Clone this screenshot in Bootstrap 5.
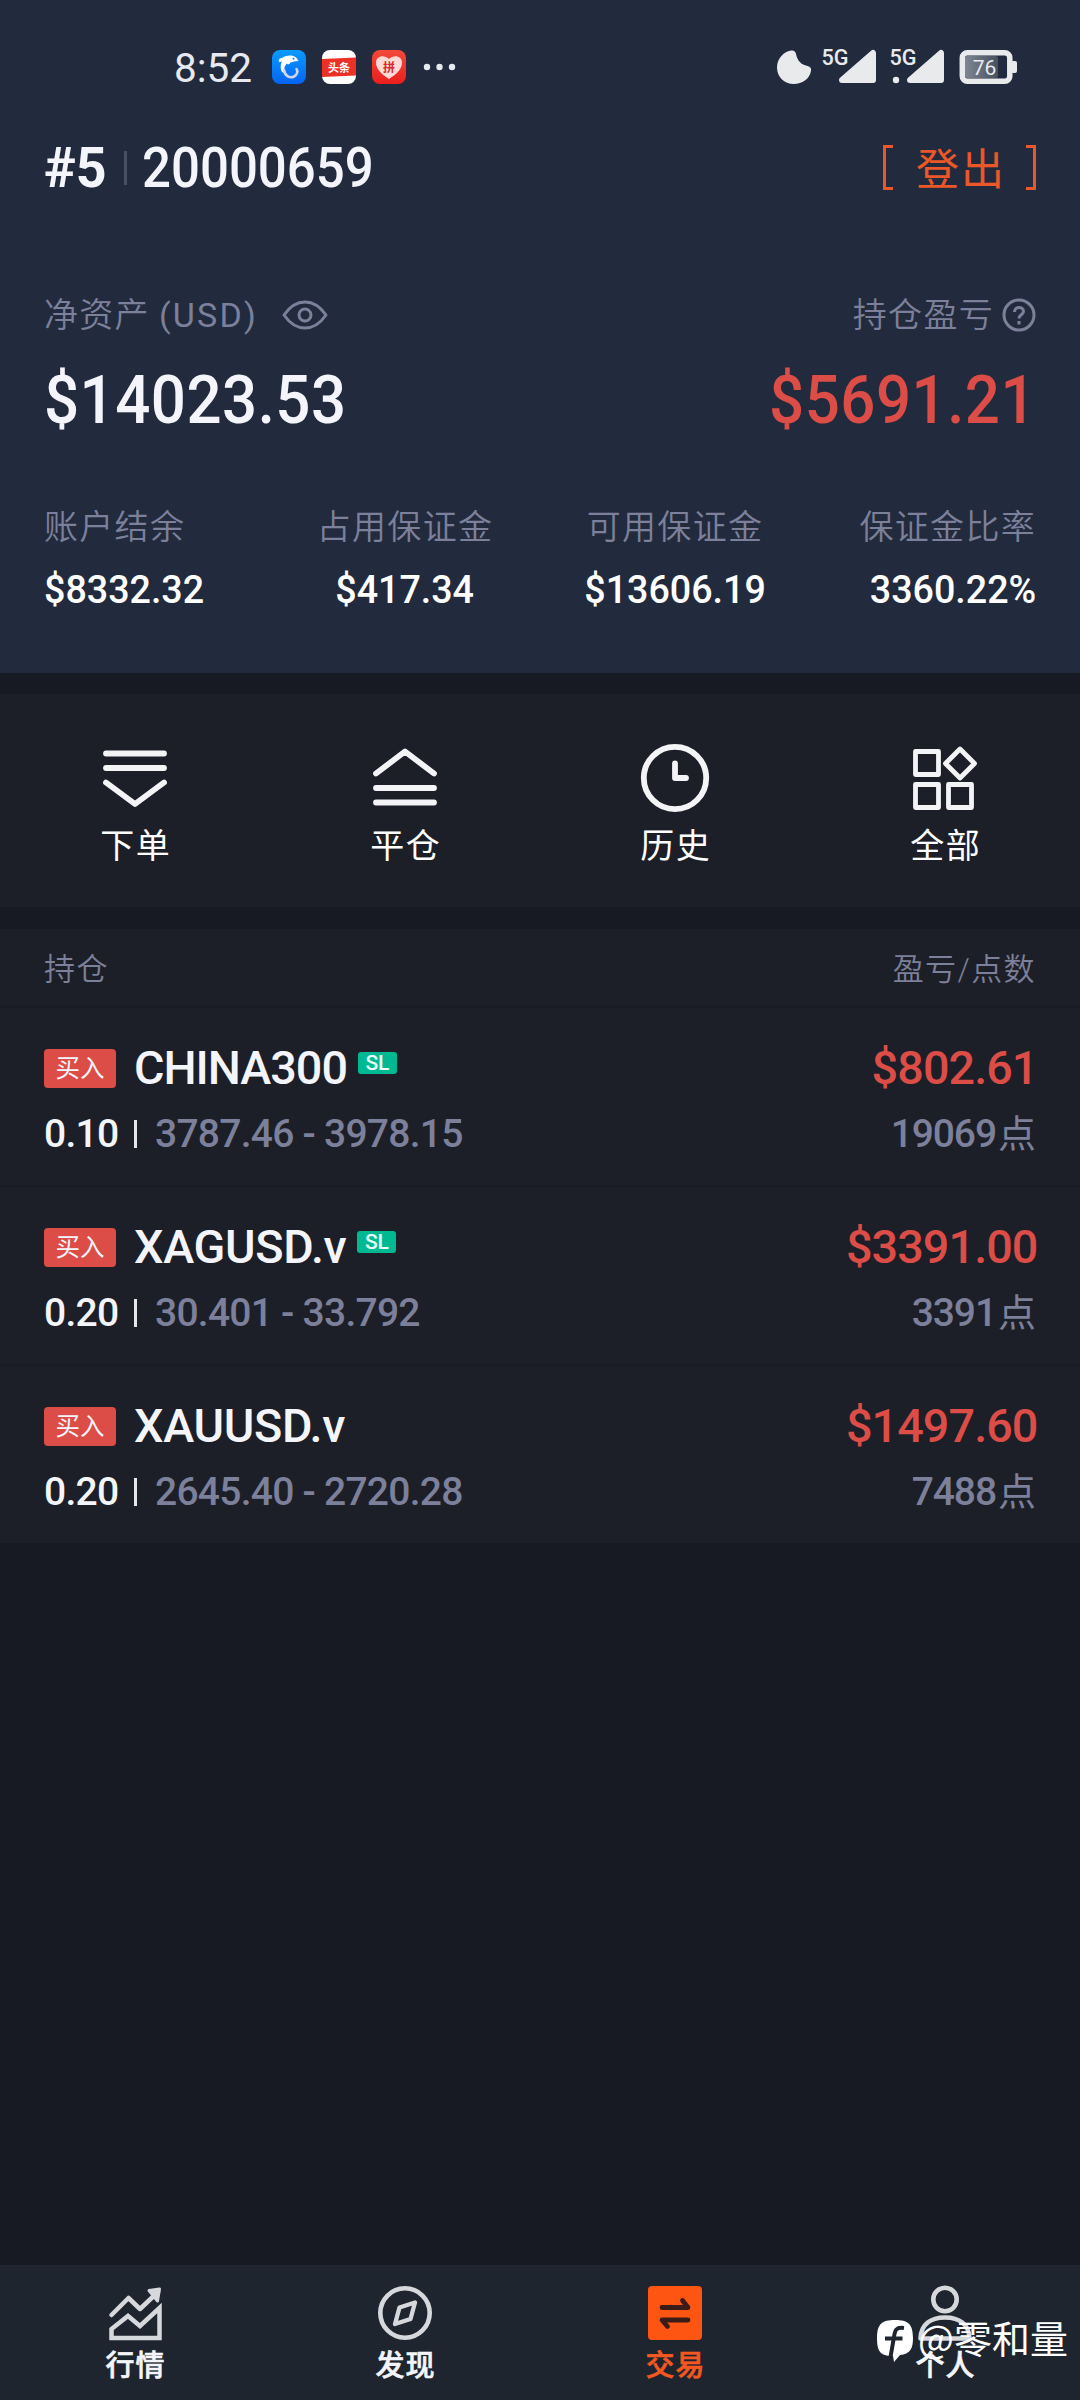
<!DOCTYPE html>
<html lang="zh-CN">
<head>
<meta charset="utf-8">
<meta name="viewport" content="width=device-width, initial-scale=1">
<title>交易</title>
<link href="https://cdn.jsdelivr.net/npm/bootstrap@5.3.0/dist/css/bootstrap.min.css" rel="stylesheet">
<style>
  body { background:#171a22; color:#f4f5fa; font-family:Roboto,"Noto Sans CJK SC",sans-serif; font-size:34px; line-height:1; }
  .screen { width:1080px; height:2400px; overflow:hidden; }
  .px { padding-left:44px; padding-right:44px; }
  .account { background:#222b3d; height:673px; }
  .statusbar { height:134px; padding:0 63px 0 174px; color:#e6e9f0; }
  .clock { font-size:40.5px; width:80px; letter-spacing:0; margin-right:18px; padding-top:2px; }
  .app-ico { width:34px; height:34px; margin-right:16px; }
  .sys { overflow:visible; }
  .acct-row { height:68px; }
  .num { font-weight:500; display:inline-block; white-space:nowrap; transform:scaleX(.93); transform-origin:left center; }
  .num-end { transform-origin:right center; }
  .num-mid { transform-origin:center; }
  .acct-id { font-size:56px; transform:scaleX(.91); }
  .acct-tag { width:80px; font-weight:700; transform:scaleX(.96); }
  .acct-sep { width:3px; height:34px; background:#4a5064; margin-right:15px; }
  .logout { color:#ea5728; font-family:"Noto Sans CJK SC",sans-serif; font-weight:400; font-size:43px; letter-spacing:2px; height:56px; line-height:50px; margin-top:-4px; }
  .brk { width:10px; height:45px; border:3px solid #ea5728; margin-top:2px; }
  .brk-l { border-right:0; margin-right:23px; } .brk-r { border-left:0; margin-left:20px; }
  .dim { color:#7c809a; }
  .cap { font-weight:350; letter-spacing:1.3px; height:40px; line-height:40px; white-space:nowrap; }
  .latin { letter-spacing:2.2px; margin-left:9px; font-weight:400; }
  .worth-cap { height:48px; margin-top:89px; line-height:48px; }
  .worth { height:80px; margin-top:21px; font-size:66.5px; letter-spacing:.5px; }
  .red { color:#db4d46; }
  .stats { margin-top:67px; }
  .stat-val { height:40px; line-height:40px; font-size:39.4px; margin-top:23px; color:#fff; }
  .stat-val .num { transform:scaleX(.955); }
  .panel { background:#1c1f27; }
  .actions { margin-top:21px; height:213px; padding-top:48px; }
  .actions svg { width:72px; height:72px; display:block; }
  .act-cap { margin-top:12px; height:40px; line-height:40px; letter-spacing:1.5px; margin-right:-1.5px; color:#fff; }
  .list-head { margin-top:22px; height:77px; font-size:31px; font-weight:350; letter-spacing:1.4px; padding-top:3px; }
  .pos { height:179px; padding-top:35px; border-top:2px solid #191c24; }
  .pos-main { height:50px; font-size:46.7px; font-weight:500; }
  .pos-sub { height:44px; margin-top:19px; font-size:39px; font-weight:500; letter-spacing:-.75px; }
  .side { width:72px; height:39px; border-radius:4px; background:#db4d46; font-size:24.5px; font-weight:400; margin:2px 18px 0 0; padding-top:1px; }
  .sym { letter-spacing:-.3px; }
  .sym-tight { letter-spacing:-1px; }
  .amt { letter-spacing:-.9px; margin-right:-1.5px; }
  .sl { width:39px; height:22px; border-radius:3px; background:#00b993; font-size:21px; font-weight:500; margin:-9px 0 0 11px; color:#e8fff8; }
  .bar { width:3px; height:28px; background:#e4e6ec; margin:0 18px; }
  .lots { width:72px; }
  .pts { letter-spacing:-1.1px; }
  .dian { font-size:38px; font-weight:400; margin-left:2px; letter-spacing:0; }
  .tabs { height:135px; background:#1f252f; border-top:1px solid #232933; padding-top:18px; position:relative; }
  .tabs svg.tab { width:58px; height:58px; display:block; }
  .tab-cap { font-size:29px; font-weight:500; -webkit-text-stroke:.6px currentColor; letter-spacing:1px; margin-right:-1px; height:34px; line-height:34px; margin-top:7px; }
  .on { color:#f4571f; }
  .wm { position:absolute; left:876px; top:50px; height:50px; font-family:"Noto Sans CJK SC",sans-serif; font-size:38px; line-height:50px; white-space:nowrap; color:#fff; }
  .wm span { padding-bottom:8px; }
</style>
<script src="https://cdn.jsdelivr.net/npm/bootstrap@5.3.0/dist/js/bootstrap.bundle.min.js"></script>
</head>
<body>
<div class="screen d-flex flex-column">

  <section class="account">
    <div class="statusbar d-flex align-items-center justify-content-between">
      <div class="d-flex align-items-center">
        <span class="clock">8:52</span>
        <svg class="app-ico" viewBox="0 0 34 34">
          <defs><linearGradient id="blu" x1="0" y1="0" x2="0" y2="1"><stop offset="0" stop-color="#0a9bff"/><stop offset="1" stop-color="#0563f2"/></linearGradient></defs>
          <rect width="34" height="34" rx="8" fill="url(#blu)"/>
          <path d="M7 12C6 9 8 8 10 8C14 5.500 18 5 21 6C24 6.500 25 8.500 26.500 11C23 11 21 12 18.500 12.500C17.500 14.500 15.500 15 15 13.500C12 16 11.500 20 14 24L10 22C8 18 8.500 14 10 11.500Z" fill="#fff"/>
          <path d="M12 20C13 26.500 18 28.500 22 26.500C25.500 24.500 26 21 24.500 19" fill="none" stroke="#cfd6ea" stroke-width="2.600" stroke-linecap="round"/>
          <circle cx="21.500" cy="8.800" r="1" fill="#0a83fa"/>
        </svg>
        <svg class="app-ico" viewBox="0 0 34 34">
          <rect width="34" height="34" rx="8" fill="#fff"/><path d="M0 9L34 7.500V25.500L0 27Z" fill="#ed3026"/>
          <text x="17" y="21.500" font-size="11" font-weight="700" text-anchor="middle" fill="#fff">头条</text>
        </svg>
        <svg class="app-ico" viewBox="0 0 34 34">
          <defs><linearGradient id="rd" x1="0" y1="0" x2="0" y2="1"><stop offset="0" stop-color="#f2493a"/><stop offset="1" stop-color="#ea1f1d"/></linearGradient></defs>
          <rect width="34" height="34" rx="8" fill="url(#rd)"/>
          <path d="M17 29C9 24 4 19 4 12.500C4 6 12 4 17 9C22 4 30 6 30 12.500C30 19 25 24 17 29Z" fill="#ffd9d6"/>
          <text x="17" y="22" font-size="12" font-weight="700" text-anchor="middle" fill="#d52a25">拼</text>
        </svg>
        <svg width="34" height="8" viewBox="0 0 34 8" fill="#e6e9f0"><circle cx="5" cy="4" r="3.200"/><circle cx="17.500" cy="4" r="3.200"/><circle cx="30" cy="4" r="3.200"/></svg>
      </div>
      <svg class="sys" width="241" height="36" viewBox="776 49 241 36" fill="#e8eaec">
        <path d="M791 50.500C794 50 795.500 51.500 796 54C797.500 61 801 64.500 807.500 66C810.500 66.500 811.500 68.500 811 71C809.500 79 802 84 794 84C784 84 777 76.500 777 67.500C777 59 783 52 791 50.500Z"/>
        <text x="821.500" y="65" font-size="21.500" font-weight="500" textLength="27" lengthAdjust="spacingAndGlyphs">5G</text>
        <path d="M842 80L873 53V80Z" stroke="#e8eaec" stroke-width="6" stroke-linejoin="round"/>
        <text x="889.500" y="65" font-size="21.500" font-weight="500" textLength="27" lengthAdjust="spacingAndGlyphs">5G</text>
        <circle cx="896" cy="80" r="3.200"/>
        <path d="M910 80L941 53V80Z" stroke="#e8eaec" stroke-width="6" stroke-linejoin="round"/>
        <defs><linearGradient id="bat"><stop offset="0" stop-color="#7f8692"/><stop offset="1" stop-color="#46505f"/></linearGradient></defs>
        <rect x="962.300" y="52.800" width="47.500" height="28.500" rx="5" fill="#222b3d" stroke="#e8eaec" stroke-width="5.500"/>
        <rect x="965" y="56" width="33" height="22" rx="2" fill="url(#bat)"/>
        <rect x="1011" y="61" width="6" height="12" rx="2"/>
        <text x="984.500" y="74.500" font-size="21" text-anchor="middle">76</text>
      </svg>
    </div>

    <div class="acct-row px d-flex align-items-center justify-content-between">
      <div class="d-flex align-items-center">
        <span class="num acct-id acct-tag">#5</span><i class="acct-sep"></i><span class="num acct-id">20000659</span>
      </div>
      <div class="logout d-flex align-items-center"><i class="brk brk-l"></i>登出<i class="brk brk-r"></i></div>
    </div>

    <div class="px d-flex justify-content-between align-items-center cap worth-cap dim">
      <div class="d-flex align-items-center">净资产<span class="latin">(USD)</span>
        <svg width="46" height="32" viewBox="0 0 46 32" class="ms-4" fill="none" stroke="#7c809a" stroke-width="3"><path d="M2 16Q11 3 23 3T44 16Q35 29 23 29T2 16Z" stroke-linejoin="round"/><circle cx="23" cy="16" r="6"/></svg>
      </div>
      <div class="d-flex align-items-center">持仓盈亏
        <svg width="34" height="34" viewBox="0 0 34 34" class="ms-2" fill="none" stroke="#7c809a" stroke-width="3"><circle cx="17" cy="17" r="15"/><path d="M12.500 14C12.500 8 21.500 8 21.500 13.500C21.500 16.500 17 16.500 17 20.500"/><path d="M17 23V26.500"/></svg>
      </div>
    </div>
    <div class="px d-flex justify-content-between align-items-center worth">
      <span class="num">$14023.53</span><span class="num num-end red">$5691.21</span>
    </div>

    <div class="row g-0 stats">
      <div class="col-3"><div class="cap dim px">账户结余</div><div class="stat-val px"><span class="num">$8332.32</span></div></div>
      <div class="col-3 text-center"><div class="cap dim">占用保证金</div><div class="stat-val"><span class="num num-mid">$417.34</span></div></div>
      <div class="col-3 text-center"><div class="cap dim">可用保证金</div><div class="stat-val"><span class="num num-mid">$13606.19</span></div></div>
      <div class="col-3 text-end"><div class="cap dim px">保证金比率</div><div class="stat-val px"><span class="num num-end">3360.22%</span></div></div>
    </div>
  </section>

  <section class="panel actions row g-0">
    <div class="col-3 d-flex flex-column align-items-center">
      <svg viewBox="0 0 72 72" fill="none" stroke="#f4f4f6" stroke-width="5.800" stroke-linecap="round" stroke-linejoin="round"><path d="M7 11.500H65M7 26H65M7 40.500L36 62L65 40.500"/></svg>
      <div class="act-cap">下单</div></div>
    <div class="col-3 d-flex flex-column align-items-center">
      <svg viewBox="0 0 72 72" fill="none" stroke="#f4f4f6" stroke-width="5.800" stroke-linecap="round" stroke-linejoin="round"><path d="M7 31.500L36 9.500L65 31.500M7 46H65M7 60.500H65"/></svg>
      <div class="act-cap">平仓</div></div>
    <div class="col-3 d-flex flex-column align-items-center">
      <svg viewBox="0 0 72 72" fill="none" stroke="#f4f4f6" stroke-width="5.800" stroke-linecap="round" stroke-linejoin="round"><circle cx="36" cy="36" r="31.200"/><path d="M36 21.500V36H47"/></svg>
      <div class="act-cap">历史</div></div>
    <div class="col-3 d-flex flex-column align-items-center">
      <svg viewBox="0 0 72 72" fill="none" stroke="#f4f4f6" stroke-width="4.800" stroke-linejoin="round"><rect x="6.500" y="9.500" width="23" height="23"/><rect x="6.500" y="42.500" width="23" height="23"/><rect x="39.500" y="42.500" width="23" height="23"/><path d="M51 7L65.500 21.500L51 36L36.500 21.500Z"/></svg>
      <div class="act-cap">全部</div></div>
  </section>

  <section>
    <div class="panel list-head px dim d-flex justify-content-between align-items-center"><span>持仓</span><span>盈亏/点数</span></div>

    <div class="panel pos px">
      <div class="pos-main d-flex justify-content-between align-items-center">
        <div class="d-flex align-items-center"><span class="side d-flex align-items-center justify-content-center">买入</span><span class="sym sym-tight">CHINA300</span><span class="sl d-flex align-items-center justify-content-center">SL</span></div>
        <span class="amt red">$802.61</span>
      </div>
      <div class="pos-sub d-flex justify-content-between align-items-center">
        <div class="d-flex align-items-center"><span class="lots">0.10</span><i class="bar"></i><span class="dim">3787.46 - 3978.15</span></div>
        <div class="d-flex align-items-center dim"><span class="pts">19069</span><span class="dian">点</span></div>
      </div>
    </div>

    <div class="panel pos px">
      <div class="pos-main d-flex justify-content-between align-items-center">
        <div class="d-flex align-items-center"><span class="side d-flex align-items-center justify-content-center">买入</span><span class="sym">XAGUSD.v</span><span class="sl d-flex align-items-center justify-content-center">SL</span></div>
        <span class="amt red">$3391.00</span>
      </div>
      <div class="pos-sub d-flex justify-content-between align-items-center">
        <div class="d-flex align-items-center"><span class="lots">0.20</span><i class="bar"></i><span class="dim">30.401 - 33.792</span></div>
        <div class="d-flex align-items-center dim"><span class="pts">3391</span><span class="dian">点</span></div>
      </div>
    </div>

    <div class="panel pos px">
      <div class="pos-main d-flex justify-content-between align-items-center">
        <div class="d-flex align-items-center"><span class="side d-flex align-items-center justify-content-center">买入</span><span class="sym">XAUUSD.v</span></div>
        <span class="amt red">$1497.60</span>
      </div>
      <div class="pos-sub d-flex justify-content-between align-items-center">
        <div class="d-flex align-items-center"><span class="lots">0.20</span><i class="bar"></i><span class="dim">2645.40 - 2720.28</span></div>
        <div class="d-flex align-items-center dim"><span class="pts">7488</span><span class="dian">点</span></div>
      </div>
    </div>
  </section>

  <nav class="tabs row g-0 mt-auto">
    <div class="col-3 d-flex flex-column align-items-center">
      <svg class="tab" viewBox="0 0 58 58" fill="none" stroke="#d6d8dc" stroke-width="4.500" stroke-linecap="round" stroke-linejoin="round"><path d="M5.500 31L22.500 14L34 25L52 8"/><path d="M43 6.500L53.500 5L51.500 17Z" fill="#d6d8dc" stroke-width="3"/><path d="M5.500 54V45L22 32L34 42L53.500 24V54Z" stroke-linejoin="miter"/></svg>
      <div class="tab-cap">行情</div></div>
    <div class="col-3 d-flex flex-column align-items-center">
      <svg class="tab" viewBox="0 0 58 58" fill="none" stroke="#d6d8dc" stroke-width="4.600" stroke-linejoin="round"><circle cx="29" cy="29" r="24.700"/><path d="M39 18.500L34.500 35L19 40L23.500 23.500Z" stroke-width="4.300"/></svg>
      <div class="tab-cap">发现</div></div>
    <div class="col-3 d-flex flex-column align-items-center">
      <svg class="tab" viewBox="0 0 58 58" fill="none" stroke="#3c1c18" stroke-width="4.800" stroke-linecap="round" stroke-linejoin="round"><rect x="2" y="2" width="54" height="54" rx="4" fill="#ff5512" stroke="none"/><path d="M16 23.500H42L36.500 16.500M42 36H16L21.500 42.500"/></svg>
      <div class="tab-cap on">交易</div></div>
    <div class="col-3 d-flex flex-column align-items-center">
      <svg class="tab" viewBox="0 0 58 58" fill="none" stroke="#d6d8dc" stroke-width="4.600" stroke-linejoin="round"><circle cx="29" cy="15.500" r="11.700"/><path d="M4.500 54.500C5 40 15 33.500 29 33.500S53 40 53.500 54.500Z"/></svg>
      <div class="tab-cap">个人</div></div>
    <div class="wm d-flex align-items-center">
      <svg width="38" height="44" viewBox="0 0 38 44" class="me-1"><path d="M19 1C32 1 37 5 37 19C37 30 34 35 24 36L18 43L17 37C4 37 1 32 1 19C1 5 6 1 19 1Z" fill="#fff"/><path d="M28 9C20 8 19 11 18 18L14.500 38M9 19.500H26.500" fill="none" stroke="#1f252f" stroke-width="4"/></svg><span>@零和量</span>
    </div>
  </nav>
</div>
</body>
</html>
